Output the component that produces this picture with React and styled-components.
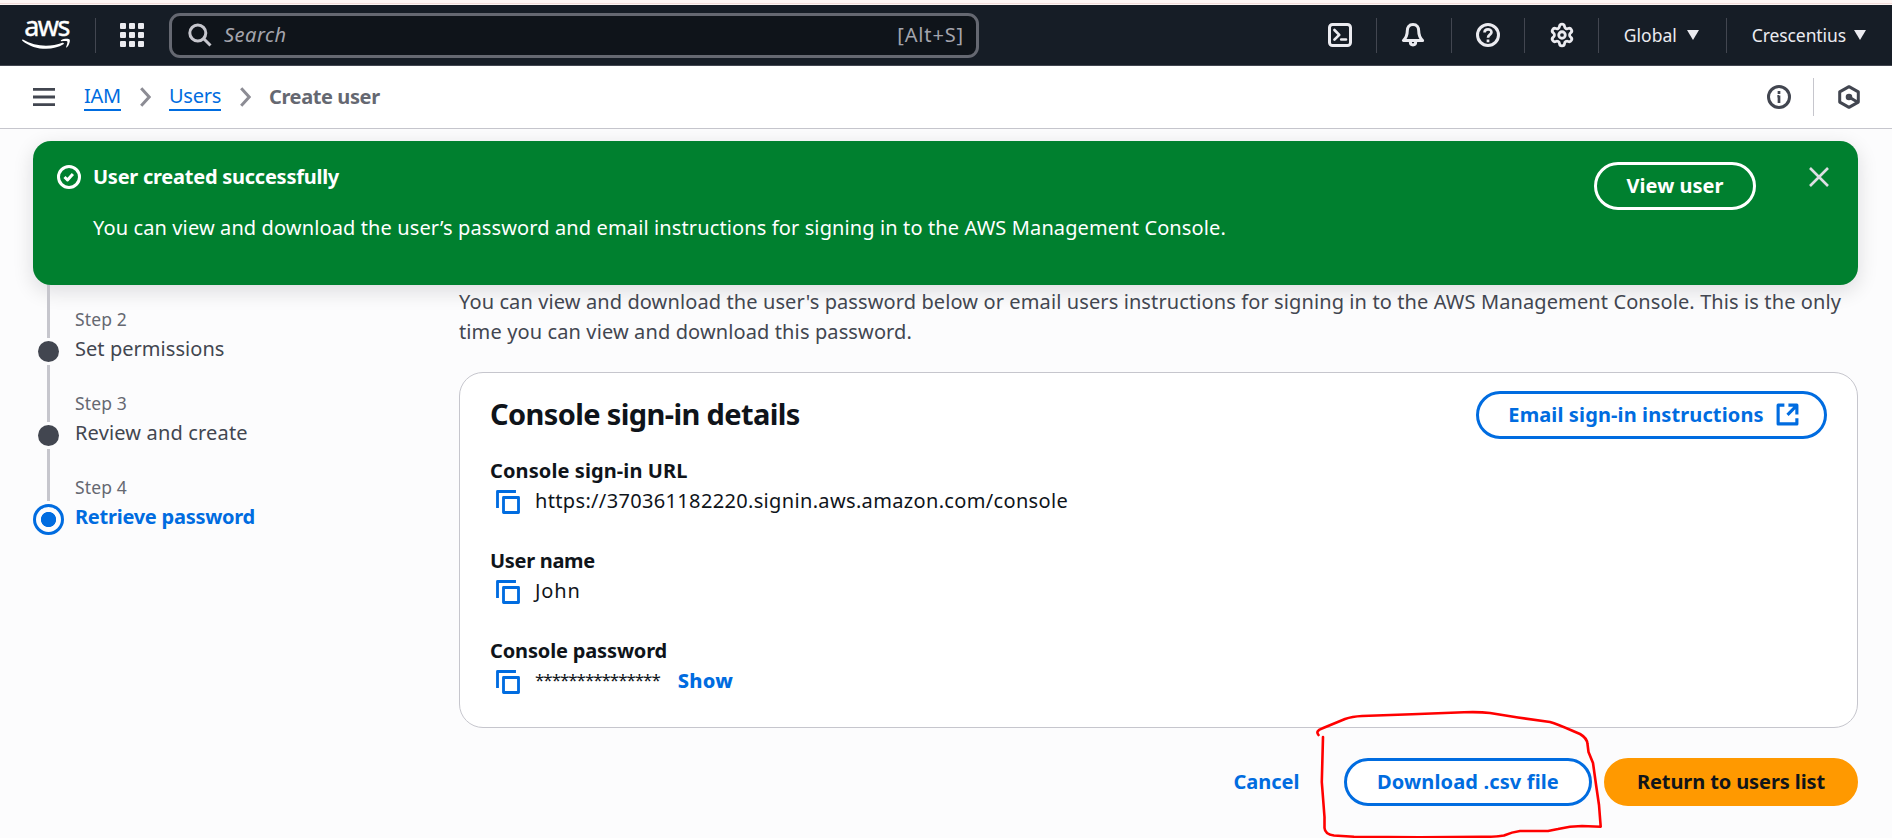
import React from "react";
import styled, { createGlobalStyle, css } from "styled-components";
import { Settings } from "lucide-react";

const Global = createGlobalStyle`
  * { box-sizing: border-box; }
  html, body { margin: 0; padding: 0; }
  body {
    background: #fcfcfd;
    font-family: "Noto Sans", "Open Sans", sans-serif;
    font-size: 20px;
    line-height: 30px;
    color: #0f141a;
    overflow: hidden;
  }
`;

const Page = styled.div`
  width: 1892px;
  height: 838px;
  position: relative;
  overflow: hidden;
  display: flex;
  flex-direction: column;
`;

const Text = styled.span`
  white-space: nowrap;
  letter-spacing: ${(p) => p.$ls || 0}px;
`;

const TopEdge = styled.div`
  height: 5px;
  flex: none;
  background: linear-gradient(#fef6f4 0 3px, #f3dcd9 3px 4px, #fef6f4 4px 5px);
`;

const NavBar = styled.header`
  height: 61px;
  flex: none;
  display: flex;
  align-items: center;
  background: #161d26;
  border-bottom: 1px solid #424650;
  padding: 0 26px 0 22px;
  color: #ebebf0;
`;

const Logo = styled.div`
  width: 49px;
  height: 36px;
  display: flex;
  flex-direction: column;
  align-items: center;
  color: #fff;
  font-size: 27px;
  line-height: 17px;
  -webkit-text-stroke: 0.4px #fff;
  svg { display: block; margin-top: 4px; }
`;

const NavDivider = styled.i`
  width: 1px;
  height: 35px;
  background: #424650;
  margin: 0 ${(p) => p.$r}px 0 ${(p) => p.$l}px;
`;

const AppGrid = styled.div`
  display: grid;
  grid-template-columns: repeat(3, 6px);
  gap: 3px;
  i { height: 6px; border-radius: 1px; background: #ebebf0; }
`;

const SearchBox = styled.div`
  width: 810px;
  height: 45px;
  margin-left: 25px;
  border: 3px solid #656871;
  border-radius: 11px;
  background: #0f141a;
  display: flex;
  align-items: center;
  padding: 0 12px 1px 16px;
  color: #a4a4ad;
  em { margin-left: 12px; flex: 1; letter-spacing: 0.5px; }
`;

const NavTools = styled.div`
  margin-left: auto;
  display: flex;
  align-items: center;
  font-size: 17.5px;
  svg { display: block; }
`;

const Caret = styled.i`
  border: 6px solid transparent;
  border-top: 10px solid #ebebf0;
  border-bottom: 0;
  margin-left: ${(p) => p.$gap}px;
`;

const CrumbBar = styled.nav`
  height: 63px;
  flex: none;
  display: flex;
  align-items: center;
  background: #fff;
  border-bottom: 1px solid #c6c6cd;
  padding: 0 31px 0 33px;
  svg { display: block; }
`;

const MenuIcon = styled.svg`
  margin-right: 29px;
`;

const Crumb = styled.a`
  color: #006ce0;
  border-bottom: 2px solid #006ce0;
  line-height: 26px;
  letter-spacing: -0.25px;
`;

const CurrentCrumb = styled.b`
  color: #656871;
  margin-bottom: 1px;
`;

const Chevron = styled.svg`
  margin: 0 18px 0 19px;
`;

const CrumbDivider = styled.i`
  width: 1px;
  height: 38px;
  background: #c6c6cd;
  margin: 0 23px 0 22px;
`;

const Banner = styled.section`
  height: 144px;
  flex: none;
  margin: 12px 34px 0 33px;
  border-radius: 18px;
  background: #00802f;
  color: #fff;
  display: flex;
  align-items: flex-start;
  padding: 21px 29px 0 24px;
  box-shadow: 0 6px 20px 1px rgba(0, 7, 22, 0.12);
  > svg { display: block; margin-top: 3px; }
`;

const BannerBody = styled.div`
  flex: 1;
  margin-left: 12px;
  display: flex;
  flex-direction: column;
  gap: 21px;
`;

const CloseIcon = styled.svg`
  && { margin: 5px 0 0 53px; }
`;

const Button = styled.button`
  height: 48px;
  flex: none;
  width: ${(p) => p.$w}px;
  display: flex;
  align-items: center;
  justify-content: center;
  gap: 11px;
  border: 3px solid #006ce0;
  border-radius: 24px;
  background: #fff;
  color: #006ce0;
  font: 700 20px/30px "Noto Sans", "Open Sans", sans-serif;
  padding: 0 0 1px ${(p) => p.$pl || 0}px;
  ${(p) => p.$kind === "flash" && css`background: transparent; border-color: #fff; color: #fff;`}
  ${(p) => p.$kind === "primary" && css`background: #ff9900; border-color: #ff9900; color: #0f141a;`}
  ${(p) => p.$kind === "link" && css`background: transparent; border-color: transparent;`}
`;

const Main = styled.div`
  display: flex;
  padding-right: 34px;
`;

const Steps = styled.ol`
  list-style: none;
  margin: 0;
  padding: 0 0 0 33px;
  width: 459px;
  flex: none;
`;

const Step = styled.li`
  display: flex;
  height: ${(p) => p.$h}px;
`;

const Track = styled.div`
  width: 31px;
  margin-right: 11px;
  display: flex;
  flex-direction: column;
  align-items: center;
`;

const Line = styled.i`
  width: 3px;
  flex: 1;
  background: #c6c6cd;
`;

const Dot = styled.i`
  width: 21px;
  height: 21px;
  border-radius: 50%;
  background: #424650;
  margin: 3px 0;
`;

const ActiveDot = styled.i`
  width: 31px;
  height: 31px;
  border-radius: 50%;
  border: 3px solid #006ce0;
  background: radial-gradient(circle, #006ce0 7.2px, #fcfcfd 8px);
  margin-top: 3px;
`;

const StepLabel = styled.div`
  display: flex;
  flex-direction: column;
  justify-content: flex-end;
  padding-bottom: ${(p) => p.$pb}px;
  color: ${(p) => (p.$active ? "#006ce0" : "#424650")};
  font-weight: ${(p) => (p.$active ? 700 : 400)};
  small {
    font-size: 17.5px;
    line-height: 29px;
    letter-spacing: 0.15px;
    color: #656871;
    font-weight: 400;
  }
`;

const Content = styled.main`
  flex: 1;
  display: flex;
  flex-direction: column;
`;

const Intro = styled.p`
  margin: 2px 0 25px;
  color: #424650;
  display: flex;
  flex-direction: column;
`;

const Card = styled.section`
  height: 356px;
  border: 1px solid #c6c6cd;
  border-radius: 24px;
  background: #fff;
  padding: 18px 30px 0;
`;

const CardHead = styled.div`
  display: flex;
  justify-content: space-between;
  align-items: center;
  margin-bottom: 17px;
  h2 { margin: 0; font-size: 29px; line-height: 46px; padding-bottom: 2px; }
`;

const Field = styled.dl`
  margin: 0 0 30px;
  dt { font-weight: 700; }
  dd { margin: 0; display: flex; align-items: center; padding-left: 6px; }
  dd svg { margin-right: 15px; position: relative; top: 1px; }
`;

const Masked = styled(Text)`
  font-size: 17px;
  letter-spacing: -1.05px;
  margin-top: -2px;
`;

const ShowLink = styled.a`
  color: #006ce0;
  font-weight: 800;
  letter-spacing: 0.3px;
  margin-left: 18px;
`;

const Actions = styled.div`
  display: flex;
  justify-content: flex-end;
  gap: 12px;
  margin-top: 30px;
`;

const Marker = styled.svg`
  position: absolute;
  left: 0;
  top: 0;
  pointer-events: none;
`;

const Icon = ({ size = 24, color = "currentColor", sw = 2, children }) => (
  <svg width={size} height={size} viewBox="0 0 16 16" fill="none" stroke={color} strokeWidth={sw} strokeLinejoin="round">
    {children}
  </svg>
);

const CopyIcon = () => (
  <Icon color="#006ce0" sw={1.9}>
    <path d="M15 5H5v10h10V5z" />
    <path d="M13.3 1H1v11" />
  </Icon>
);

const CrumbArrow = () => (
  <Chevron width="11" height="20" viewBox="0 0 11 20" fill="none" stroke="#8c8c94" strokeWidth="3">
    <path d="M1.2 1.2l8 8.800-8 8.800" />
  </Chevron>
);

const fields = [
  { label: "Console sign-in URL", ls: 0.1, value: "https://370361182220.signin.aws.amazon.com/console", valueLs: 0.34 },
  { label: "User name", ls: -0.3, value: "John", valueLs: 0.9 },
  { label: "Console password", ls: -0.15, masked: "***************" },
];

export default function App() {
  return (
    <Page>
      <Global />
      <TopEdge />
      <NavBar>
        <Logo>
          <Text $ls={-1.6}>aws</Text>
          <svg width="49" height="12" viewBox="0 0 49 12" fill="#fff" stroke="none">
            <path d="M.9 1.600C13 8.800 28 9.600 40.500 4.800c1.200-.4 1.900.8.9 1.500C31 13 12 12.600.3 2.700c-.5-.6-.1-1.400.6-1.100z" />
            <path d="M39 2.300c2.600-1.900 7.700-1.900 8.600-.9.8 1.200-.3 5.700-2.800 7.900-.5.4-1 .2-.7-.4.700-1.800 1.700-4.600 1.200-5.400-.6-.8-3.800-.5-5.700-.3-.8.100-1-.500-.6-.9z" />
          </svg>
        </Logo>
        <NavDivider $l={24} $r={24} />
        <AppGrid>{Array.from({ length: 9 }, (_, i) => <i key={i} />)}</AppGrid>
        <SearchBox>
          <svg width="24" height="24" viewBox="0 0 24 24" fill="none" stroke="#c6c6cd" strokeWidth="3">
            <circle cx="9.800" cy="10" r="8" />
            <path d="M15.500 15.500l7 7" />
          </svg>
          <em>Search</em>
          <Text $ls={0.85}>[Alt+S]</Text>
        </SearchBox>
        <NavTools>
          <Icon>
            <rect x="1" y="1" width="14" height="14" rx="2" />
            <path d="M4.300 4.700L7.500 7.900 4.300 11.100M8.800 11H12" strokeWidth="1.800" strokeLinecap="round" />
          </Icon>
          <NavDivider $l={24} $r={24} />
          <Icon>
            <path d="M8 1C5.300 1 4.200 3 4.200 5.200c0 3.200-.7 4.600-2.600 6.500h12.800c-1.900-1.900-2.600-3.300-2.600-6.500C11.800 3 10.700 1 8 1z" />
            <path d="M6.200 12.500c0 2.800 3.600 2.800 3.600 0" />
          </Icon>
          <NavDivider $l={26} $r={24} />
          <Icon>
            <circle cx="8" cy="8" r="7" />
            <path d="M5.700 6.300C5.700 3.500 10.300 3.500 10.300 6.200 10.300 7.800 8 7.800 8 9.800M8 11v1.800" strokeWidth="1.800" />
          </Icon>
          <NavDivider $l={24} $r={24} />
          <Settings size={26} strokeWidth={2.6} />
          <NavDivider $l={23} $r={25} />
          <Text>Global</Text>
          <Caret $gap={10} />
          <NavDivider $l={27} $r={25} />
          <Text $ls={-0.1}>Crescentius</Text>
          <Caret $gap={8} />
        </NavTools>
      </NavBar>

      <CrumbBar>
        <MenuIcon width="22" height="18" viewBox="0 0 22 18" fill="#424650">
          <path d="M0 0h22v2.800H0zM0 7.600h22v2.800H0zM0 15.200h22V18H0z" />
        </MenuIcon>
        <Crumb>IAM</Crumb>
        <CrumbArrow />
        <Crumb>Users</Crumb>
        <CrumbArrow />
        <CurrentCrumb><Text $ls={-0.4}>Create user</Text></CurrentCrumb>
        <NavTools>
          <Icon color="#424650">
            <circle cx="8" cy="8" r="7" />
            <path d="M8 7v5M8 4v2M6.900 7.500H8" strokeWidth="1.800" />
          </Icon>
          <CrumbDivider />
          <Icon color="#424650">
            <path d="M8 1.100l6.200 3.500v6.800L8 14.900l-6.200-3.500V4.600z" />
            <circle cx="8" cy="8" r="1.200" />
            <path d="M8 8l5.300 3.200" />
          </Icon>
        </NavTools>
      </CrumbBar>

      <Banner>
        <Icon color="#fff">
          <circle cx="8" cy="8" r="7" />
          <path d="M5 8l2 2 3.600-4" />
        </Icon>
        <BannerBody>
          <b><Text $ls={-0.25}>User created successfully</Text></b>
          <Text $ls={0.12}>You can view and download the user’s password and email instructions for signing in to the AWS Management Console.</Text>
        </BannerBody>
        <Button $kind="flash" $w={162}><Text>View user</Text></Button>
        <CloseIcon width="20" height="20" viewBox="0 0 20 20" stroke="#dedee3" strokeWidth="2.600">
          <path d="M1 1l18 18M19 1L1 19" />
        </CloseIcon>
      </Banner>

      <Main>
        <Steps>
          <Step $h={80}>
            <Track><Line /><Dot /></Track>
            <StepLabel $pb={1}><small>Step 2</small><Text $ls={0.05}>Set permissions</Text></StepLabel>
          </Step>
          <Step $h={84}>
            <Track><Line /><Dot /></Track>
            <StepLabel $pb={1}><small>Step 3</small><Text $ls={0.16}>Review and create</Text></StepLabel>
          </Step>
          <Step $h={86}>
            <Track><Line /><ActiveDot /></Track>
            <StepLabel $pb={3} $active><small>Step 4</small><Text $ls={-0.25}>Retrieve password</Text></StepLabel>
          </Step>
        </Steps>
        <Content>
          <Intro>
            <Text $ls={0.108}>You can view and download the user's password below or email users instructions for signing in to the AWS Management Console. This is the only</Text>
            <Text $ls={0.12}>time you can view and download this password.</Text>
          </Intro>
          <Card>
            <CardHead>
              <h2><Text $ls={-0.62}>Console sign-in details</Text></h2>
              <Button $w={351} $pl={5}>
                <Text $ls={0.12}>Email sign-in instructions</Text>
                <Icon size={25}>
                  <path d="M8.600 2H14v6M8 8.200L13.500 2.700M14 10.400V14H2V2h4" />
                </Icon>
              </Button>
            </CardHead>
            {fields.map((f) => (
              <Field key={f.label}>
                <dt><Text $ls={f.ls}>{f.label}</Text></dt>
                <dd>
                  <CopyIcon />
                  {f.masked ? <Masked as={MaskedText}>{f.masked}</Masked> : <Text $ls={f.valueLs}>{f.value}</Text>}
                  {f.masked && <ShowLink>Show</ShowLink>}
                </dd>
              </Field>
            ))}
          </Card>
          <Actions>
            <Button $kind="link" $w={131}><Text>Cancel</Text></Button>
            <Button $w={248}><Text $ls={0.14}>Download .csv file</Text></Button>
            <Button $kind="primary" $w={254}><Text $ls={-0.1}>Return to users list</Text></Button>
          </Actions>
        </Content>
      </Main>

      <Marker width="1892" height="838" fill="none" stroke="#ff0000" strokeWidth="2.600" strokeLinecap="round" strokeLinejoin="round">
        <path d="M1318.500 735C1316 732 1318 730 1322 728.500L1345 719Q1352 716.500 1362 716L1412 714.300L1464 712.300Q1480 711.800 1490 713L1518 717.500L1550 722Q1557 724 1573 731L1580 734Q1587 738 1587.500 744L1588.500 752L1593 763Q1596 785 1599 805L1600.700 826.700L1582 826Q1570 826 1558 829L1548 831L1520 831Q1512 832 1504 835.500Q1496 837 1482 836.700L1420 837.400L1354 836.700L1334 835.500Q1325 834.500 1324.500 828L1324.500 817L1321.800 782L1323 737" />
      </Marker>
    </Page>
  );
}

const MaskedText = "span";
